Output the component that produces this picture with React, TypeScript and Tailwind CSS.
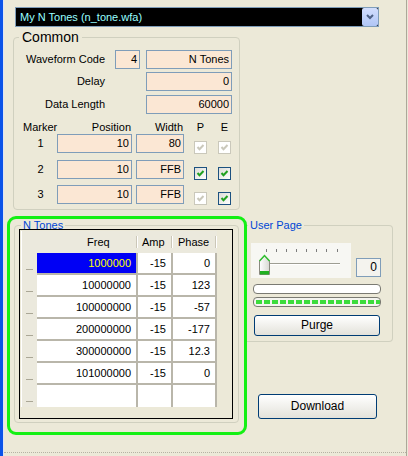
import React from 'react';

const rows = [
  ['1000000', '-15', '0'],
  ['10000000', '-15', '123'],
  ['100000000', '-15', '-57'],
  ['200000000', '-15', '-177'],
  ['300000000', '-15', '12.3'],
  ['101000000', '-15', '0'],
  ['', '', ''],
];

function Check({ on, enabled }: { on: boolean; enabled: boolean }) {
  return (
    <div
      className={
        enabled
          ? 'w-[13px] h-[13px] border border-[#1c5180] bg-gradient-to-br from-[#dcdcd7] to-white flex items-center justify-center'
          : 'w-[13px] h-[13px] border border-[#cac8bb] bg-white flex items-center justify-center'
      }
    >
      {on && (
        <svg width="9" height="9" viewBox="0 0 9 9">
          <path d="M1.5 4 L3.5 6.2 L7.5 2" fill="none" stroke={enabled ? '#21a121' : '#cac8bb'} strokeWidth="2" />
        </svg>
      )}
    </div>
  );
}

function Field({ w, children }: { w: string; children?: React.ReactNode }) {
  return (
    <div className={`${w} h-[19px] border border-[#7f9db9] bg-[#fbe7d4] text-right pr-[2px] leading-[17px]`}>
      {children}
    </div>
  );
}

function Slider() {
  const ticks = [15, 25, 35, 45, 55, 65, 75, 86];
  return (
    <div className="w-[100px] h-[35px] bg-[#f7f7f3]">
      <svg width="100" height="35" viewBox="0 0 100 35">
        {ticks.map((x) => (
          <line key={x} x1={x + 0.5} y1="6" x2={x + 0.5} y2="9" stroke="#7c7c7c" />
        ))}
        <rect x="17" y="20" width="72" height="1" fill="#9d9d92" />
        <rect x="17" y="21" width="72" height="1" fill="#ffffff" />
        <defs>
          <linearGradient id="th" x1="0" y1="0" x2="1" y2="0">
            <stop offset="0" stopColor="#ffffff" />
            <stop offset="1" stopColor="#d8d8d2" />
          </linearGradient>
        </defs>
        <path d="M8.5 18 L13.5 12.5 L18.5 18 L18.5 31.5 L8.5 31.5 Z" fill="url(#th)" stroke="#8a8a80" />
        <path d="M8.5 18 L13.5 12.5 L18.5 18" fill="none" stroke="#2fbf2f" strokeWidth="1.5" />
        <rect x="9" y="28" width="9" height="3.5" fill="#21b021" />
      </svg>
    </div>
  );
}

export default function App() {
  return (
    <div className="w-[408px] h-[456px] bg-[#ece9d8] flex overflow-hidden font-['Liberation_Sans',Arial,sans-serif] text-[11px] text-black">
      <div className="w-[3px] bg-[#0b53e8]" />
      <div className="w-px bg-[#dfe5f3]" />
      <div className="w-[402px] flex flex-col">
        <div className="h-[452px] flex flex-col">
          {/* waveform select */}
          <div className="mt-[7px] ml-[11px] w-[364px] h-[20px] border border-[#7f9db9] bg-black flex items-center">
            <span className="flex-1 pl-[4px] text-[#99ffff] leading-[18px]">My N Tones (n_tone.wfa)</span>
            <div className="w-[16px] h-[18px] rounded-[2px] bg-gradient-to-b from-[#d2defd] to-[#b0c6f6] flex items-center justify-center">
              <svg width="10" height="8" viewBox="0 0 10 8">
                <path d="M2 2 L5 5 L8 2" fill="none" stroke="#4d6185" strokeWidth="2" />
              </svg>
            </div>
          </div>

          {/* Common */}
          <fieldset className="mt-[3px] ml-[9px] w-[227px] border border-[#d0d0bf] rounded-[4px] pb-[5px]">
            <legend className="ml-[5px] px-[3px] text-[14px] leading-[14px] font-normal">Common</legend>
            <div className="mt-[6px] flex items-center">
              <span className="w-[91px] text-right">Waveform Code</span>
              <div className="ml-[10px]"><Field w="w-[25px]">4</Field></div>
              <div className="ml-[6px]"><Field w="w-[86px]">N Tones</Field></div>
            </div>
            <div className="mt-[3px] flex items-center">
              <span className="w-[91px] text-right">Delay</span>
              <div className="ml-[41px]"><Field w="w-[86px]">0</Field></div>
            </div>
            <div className="mt-[4px] flex items-center">
              <span className="w-[91px] text-right">Data Length</span>
              <div className="ml-[41px]"><Field w="w-[86px]">60000</Field></div>
            </div>
            <div className="mt-[7px] flex h-[13px] leading-[13px]">
              <span className="w-[43px] pl-[9px] whitespace-nowrap">Marker</span>
              <span className="w-[75px] text-right pr-[1px]">Position</span>
              <span className="ml-[4px] w-[48px] text-right pr-[1px]">Width</span>
              <span className="ml-[10px] w-[13px] text-center">P</span>
              <span className="ml-[11px] w-[13px] text-center">E</span>
            </div>
            {[
              { n: '1', w: '80', p: false, e: false, mt: 'mt-0' },
              { n: '2', w: 'FFB', p: true, e: true, mt: 'mt-[7px]' },
              { n: '3', w: 'FFB', p: false, e: true, mt: 'mt-[6px]' },
            ].map((r) => (
              <div key={r.n} className={`${r.mt} flex items-end`}>
                <span className="w-[43px] pl-[10px] text-center self-center">{r.n}</span>
                <Field w="w-[75px]">10</Field>
                <div className="ml-[4px]"><Field w="w-[48px]">{r.w}</Field></div>
                <div className="ml-[10px] mb-[-1px]"><Check on enabled={r.p} /></div>
                <div className="ml-[11px] mb-[-1px]"><Check on enabled={r.e} /></div>
              </div>
            ))}
          </fieldset>

          <div className="mt-[6px] flex">
            {/* N Tones, highlighted */}
            <div className="ml-[3px] w-[240px] h-[219px] border-[3px] border-[#14f014] rounded-[9px]">
              <fieldset className="ml-[4px] w-[225px] border border-[#d0d0bf] rounded-[4px] pb-[3px]">
                <legend className="ml-[6px] px-[2px] text-[#0046d5] leading-[12px] font-normal">N Tones</legend>
                <div className="mt-[-2px] ml-[4px] w-[214px] h-[190px] border border-black p-[1px]">
                  <div className="w-[196px] h-[176px] overflow-hidden">
                    <div className="flex h-[22px] bg-[#ebe9dd]">
                      <div className="w-[16px] border-l border-white" />
                      <div className="w-[101px] flex items-center">
                        <span className="flex-1 pl-[50px]">Freq</span>
                        <span className="w-px h-[12px] bg-[#cbc7b8]" />
                        <span className="w-px h-[12px] bg-white" />
                      </div>
                      <div className="w-[35px] flex items-center">
                        <span className="flex-1 pl-[4px]">Amp</span>
                        <span className="w-px h-[12px] bg-[#cbc7b8]" />
                        <span className="w-px h-[12px] bg-white" />
                      </div>
                      <div className="w-[44px] flex items-center">
                        <span className="flex-1 pl-[5px]">Phase</span>
                        <span className="w-px h-[12px] bg-[#cbc7b8]" />
                        <span className="w-px h-[12px] bg-white" />
                      </div>
                    </div>
                    {rows.map((r, i) => {
                      const last = i === rows.length - 1;
                      const bb = last ? '' : 'border-b-2';
                      return (
                        <div key={i} className="flex h-[22px]">
                          <div className="w-[16px] bg-[#ebe9dd] border-l border-white flex items-end justify-center pb-[5px]">
                            <span className="w-[7px] h-px bg-[#aaa796]" />
                          </div>
                          <div className={`w-[101px] border-r-2 ${bb} border-[#b9b6aa] text-right pr-[5px] leading-[20px] ${i === 0 ? 'bg-[#0000f5] text-[#ffff00]' : 'bg-white'}`}>
                            {r[0]}
                          </div>
                          <div className={`w-[35px] border-r-2 ${bb} border-[#b9b6aa] bg-white text-right pr-[5px] leading-[20px]`}>
                            {r[1]}
                          </div>
                          <div className={`w-[44px] border-r-2 ${bb} border-[#b9b6aa] bg-white text-right pr-[5px] leading-[20px]`}>
                            {r[2]}
                          </div>
                        </div>
                      );
                    })}
                  </div>
                </div>
              </fieldset>
            </div>

            {/* User Page */}
            <div className="w-[159px] pt-[3px] flex flex-col">
              <fieldset className="w-[146px] border border-l-0 border-[#d0d0bf] rounded-r-[4px] pb-[5px]">
                <legend className="ml-[1px] px-[2px] text-[#0046d5] leading-[12px] font-normal">User Page</legend>
                <div className="mt-[12px] flex items-end">
                  <div className="ml-[4px]"><Slider /></div>
                  <div className="ml-[5px] mb-px w-[25px] h-[19px] border border-[#7f9db9] bg-[#f4f3ee] text-right pr-[3px] text-[12px] leading-[17px]">
                    0
                  </div>
                </div>
                <div className="mt-[6px] ml-[6px] w-[128px] h-[10px] rounded-[4px] border border-[#7a7a72] bg-white" />
                <div className="mt-[3px] ml-[6px] w-[128px] h-[10px] rounded-[4px] border border-[#7a7a72] bg-[#f4f4f0] flex items-center gap-[2px] pl-[2px] overflow-hidden">
                  {Array.from({ length: 16 }).map((_, i) => (
                    <span key={i} className="shrink-0 w-[6px] h-[4px] bg-[#3cdc3c]" />
                  ))}
                </div>
                <button className="mt-[8px] ml-[7px] w-[126px] h-[21px] rounded-[3px] border border-[#003c74] bg-gradient-to-b from-white to-[#e3e2da] text-[12px] leading-[19px]">
                  Purge
                </button>
              </fieldset>
              <button className="mt-[52px] ml-[11px] w-[119px] h-[25px] rounded-[3px] border border-[#003c74] bg-gradient-to-b from-white to-[#e3e2da] text-[12px] leading-[23px]">
                Download
              </button>
            </div>
          </div>
        </div>
        <div className="border-t border-dotted border-[#b5b2a3]" />
      </div>
      <div className="w-px bg-[#aca899]" />
      <div className="w-px" />
    </div>
  );
}
